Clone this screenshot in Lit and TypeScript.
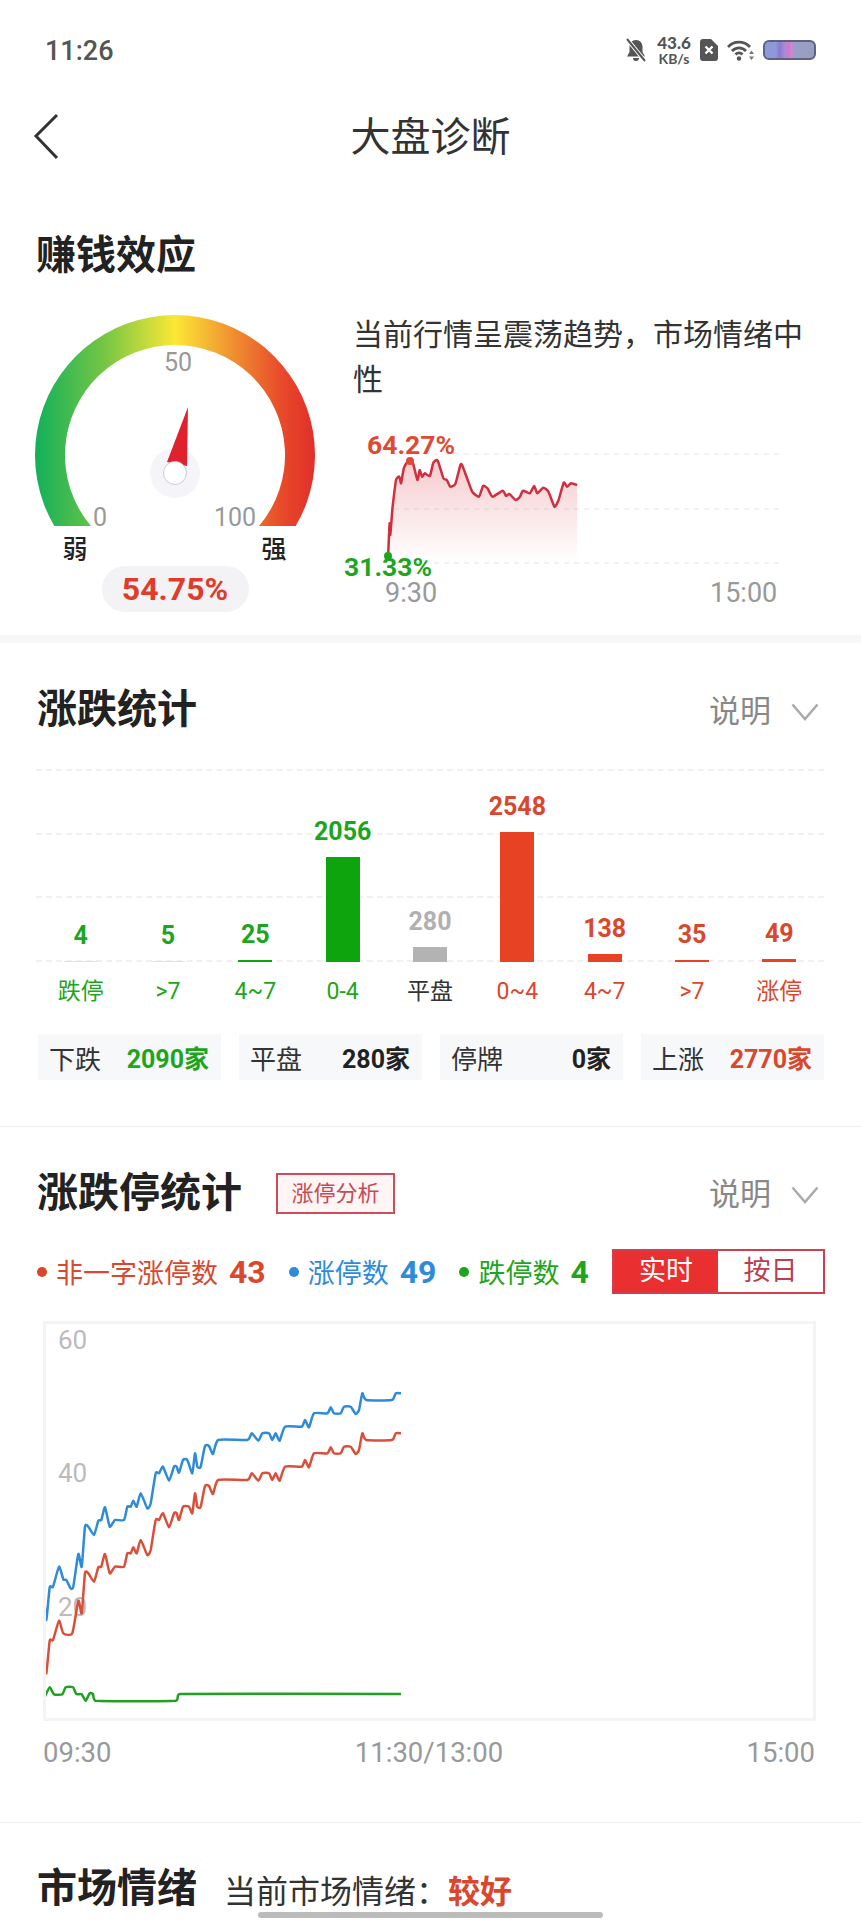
import { LitElement, html, css } from 'lit';
import { customElement } from 'lit/decorators.js';

type Pt = [number, number];

const clamp = (v: number, a: number, b: number) => Math.min(Math.max(v, a), b);

// smooth line through the points, kept tight so the small peaks survive
function smooth(pts: Pt[], t = 0.55): string {
  let d = `M${pts[0][0].toFixed(1)} ${pts[0][1].toFixed(1)}`;
  for (let i = 0; i < pts.length - 1; i++) {
    const p0 = pts[i - 1] || pts[i];
    const p1 = pts[i];
    const p2 = pts[i + 1];
    const p3 = pts[i + 2] || p2;
    const c1x = clamp(p1[0] + ((p2[0] - p0[0]) / 6) * t, p1[0], p2[0]);
    const c1y = p1[1] + ((p2[1] - p0[1]) / 6) * t;
    const c2x = clamp(p2[0] - ((p3[0] - p1[0]) / 6) * t, p1[0], p2[0]);
    const c2y = p2[1] - ((p3[1] - p1[1]) / 6) * t;
    d += `C${c1x.toFixed(1)} ${c1y.toFixed(1)} ${c2x.toFixed(1)} ${c2y.toFixed(1)} ${p2[0].toFixed(1)} ${p2[1].toFixed(1)}`;
  }
  return d;
}

const miniLine: Pt[] = ([
  [172, 760], [176, 670], [178, 705], [185, 620], [195, 540], [205, 530], [210, 550], [218, 505], [232, 480],
  [245, 490], [258, 540], [265, 510], [272, 530], [280, 520], [295, 528], [305, 488], [318, 482], [335, 535],
  [345, 540], [355, 560], [370, 552], [385, 495], [390, 495], [405, 535], [420, 575], [440, 590], [452, 558],
  [465, 565], [480, 590], [510, 572], [520, 588], [530, 582], [548, 600], [560, 592], [570, 572], [590, 580],
  [603, 558], [612, 580], [630, 563], [645, 575], [663, 620], [675, 600], [690, 548], [700, 560], [712, 550], [730, 555],
] as Pt[]).map(([x, y]) => [330 + x / 2.953, 300 + y / 3] as Pt);

const tail: Pt[] = [
  [655, 390], [668, 370], [688, 392], [700, 370], [720, 370], [730, 390], [740, 370], [752, 392], [768, 350],
  [818, 350], [828, 330], [840, 352], [855, 310], [895, 310], [905, 292], [915, 310], [935, 310], [945, 290],
  [965, 290], [980, 312], [990, 300], [1000, 250], [1012, 270], [1088, 270], [1100, 250], [1116, 250],
];

const toPage = (pts: Pt[]) => pts.map(([x, y]) => [30 + x / 3, 1310 + y / 3] as Pt);

const blueLine = toPage([
  [45, 860], [52, 930], [62, 832], [72, 830], [90, 770], [103, 808], [112, 810], [125, 835], [133, 830], [148, 732],
  [158, 770], [168, 650], [178, 650], [195, 675], [208, 632], [217, 630], [228, 592], [242, 650], [258, 630], [285, 630],
  [295, 590], [305, 590], [313, 572], [323, 590], [335, 550], [355, 595], [365, 580], [380, 490], [390, 490], [402, 470],
  [420, 512], [435, 470], [443, 470], [450, 488], [462, 450], [475, 450], [490, 490], [498, 430], [505, 470], [515, 470],
  [528, 408], [540, 408], [552, 432], [568, 390],
  ...tail,
]);

const redLine = toPage([
  [45, 1050], [52, 1090], [62, 992], [72, 990], [90, 932], [103, 970], [130, 970], [148, 872], [158, 910], [168, 790],
  [178, 790], [195, 815], [208, 772], [217, 770], [228, 732], [242, 790], [258, 770], [285, 770], [295, 730], [305, 730],
  [313, 712], [323, 730], [335, 690], [355, 735], [365, 720], [380, 630], [390, 630], [402, 610], [420, 652], [435, 610],
  [443, 610], [450, 630], [462, 590], [480, 590], [490, 610], [498, 550], [505, 590], [515, 590], [528, 528], [540, 528],
  [552, 552], [568, 510],
  ...tail.map(([x, y]) => [x, y + 120] as Pt),
]);

const greenLine = toPage([
  [45, 1165], [62, 1132], [75, 1153], [100, 1153], [110, 1132], [132, 1132], [142, 1152], [158, 1153], [170, 1172],
  [182, 1150], [192, 1152], [200, 1172], [440, 1172], [452, 1152], [1116, 1152],
]);

const bars = [
  { value: '4', label: '跌停', h: 1, tone: 'down', bar: '#e4e4e4' },
  { value: '5', label: '>7', h: 1, tone: 'down', bar: '#e4e4e4' },
  { value: '25', label: '4~7', h: 2, tone: 'down', bar: '#0ea40e' },
  { value: '2056', label: '0-4', h: 105, tone: 'down', bar: '#0ea40e' },
  { value: '280', label: '平盘', h: 15, tone: 'flat', bar: '#b3b3b3' },
  { value: '2548', label: '0~4', h: 130, tone: 'up', bar: '#e64223' },
  { value: '138', label: '4~7', h: 8, tone: 'up', bar: '#e64223' },
  { value: '35', label: '>7', h: 2, tone: 'up', bar: '#e64223' },
  { value: '49', label: '涨停', h: 3, tone: 'up', bar: '#e64223' },
];

const totals = [
  { label: '下跌', value: '2090家', tone: 'down' },
  { label: '平盘', value: '280家', tone: 'dark' },
  { label: '停牌', value: '0家', tone: 'dark' },
  { label: '上涨', value: '2770家', tone: 'up' },
];

const legend = [
  { label: '非一字涨停数', value: '43', tone: 'up' },
  { label: '涨停数', value: '49', tone: 'blue' },
  { label: '跌停数', value: '4', tone: 'down' },
];

@customElement('app-root')
export class AppRoot extends LitElement {
  static override styles = css`
    :host {
      display: block;
      position: relative;
      width: 861px;
      height: 1920px;
      overflow: hidden;
      background: #fff;
      color: #222;
      font-family: Roboto, 'Noto Sans CJK SC', sans-serif;
    }

    svg {
      display: block;
    }

    .status {
      display: flex;
      align-items: center;
      height: 100px;
      padding: 0 45px;
      color: #555;
    }

    .time {
      margin-top: 2px;
      font-size: 27px;
      font-weight: 500;
    }

    .status-icons {
      display: flex;
      align-items: center;
      margin-left: auto;
    }

    .speed {
      display: flex;
      flex-direction: column;
      align-items: center;
      width: 36px;
      margin: 0 8px 0 9px;
      font-weight: 700;
      font-family: Lato, Roboto, sans-serif;
    }

    .speed b {
      font-size: 17px;
      line-height: 17px;
    }

    .speed span {
      font-size: 14px;
      line-height: 15px;
    }

    .battery {
      position: relative;
      width: 53px;
      height: 20px;
      margin-left: 8px;
      box-sizing: border-box;
      border: 2px solid #5d6283;
      border-radius: 6px;
      background: linear-gradient(90deg, #8c9bd8 0%, #8c9bd8 22%, #8a78d0 30%, #a88bd6 40%, #d676c8 48%, #c98ad0 54%, #99a0c8 62%, #979dc2 100%);
    }

    .nav {
      position: relative;
      display: flex;
      align-items: center;
      justify-content: center;
      height: 68px;
      padding-bottom: 4px;
      font-size: 40px;
      color: #333;
    }

    .back {
      position: absolute;
      left: 32px;
      top: 12px;
    }

    .head {
      display: flex;
      align-items: center;
      height: 48px;
      padding: 0 37px;
    }

    .head h2 {
      margin: 0;
      font-size: 40px;
      line-height: 48px;
      font-weight: 700;
      color: #222;
    }

    .earn {
      height: 463px;
      padding-top: 60px;
      box-sizing: border-box;
    }

    .earn .head {
      padding-left: 36px;
    }

    .earn-body {
      display: flex;
      margin-top: 20px;
    }

    .gauge {
      display: flex;
      flex-direction: column;
      align-items: center;
      width: 350px;
      flex: none;
    }

    .pill {
      width: 147px;
      height: 46px;
      line-height: 46px;
      text-align: center;
      border-radius: 23px;
      background: #f3f3f5;
      color: #e03c2b;
      font-size: 32px;
      font-weight: 700;
    }

    .earn-right {
      flex: 1;
    }

    .earn-right p {
      width: 452px;
      margin: 12px 0 0 3px;
      font-size: 30px;
      line-height: 45px;
      color: #333;
    }

    .earn-right svg {
      margin: 18px 0 0 -10px;
    }

    .band {
      height: 8px;
      background: #f7f7f7;
    }

    .more {
      display: flex;
      align-items: center;
      margin-left: auto;
      padding-bottom: 4px;
      font-size: 31px;
      color: #888;
    }

    .more svg {
      margin: 8px 5px 0 20px;
    }

    .updown {
      padding-top: 43px;
      padding-bottom: 46px;
      border-bottom: 1px solid #eee;
    }

    .plot {
      position: relative;
      height: 193px;
      margin: 35px 37px 0 36px;
    }

    .rules {
      position: absolute;
      inset: 0;
      display: flex;
      flex-direction: column;
      justify-content: space-between;
    }

    .rules i {
      display: block;
      border-top: 2px dashed #f0f0f0;
    }

    .cols,
    .labels {
      position: relative;
      display: grid;
      grid-template-columns: repeat(9, 1fr);
      padding: 0 1px;
    }

    .cols {
      height: 100%;
      align-items: end;
    }

    .col {
      display: flex;
      flex-direction: column;
      align-items: center;
    }

    .value {
      margin-bottom: 10px;
      font-size: 25px;
      line-height: 30px;
      font-weight: 700;
    }

    .bar {
      width: 34px;
    }

    .labels {
      margin: 15px 37px 0 36px;
      font-size: 23px;
      line-height: 30px;
      text-align: center;
    }

    .down {
      color: #1ea51e;
    }

    .flat {
      color: #b0b0b0;
    }

    .up {
      color: #d9472d;
    }

    .blue {
      color: #2e8bd8;
    }

    .dark {
      color: #222;
    }

    .labels .flat {
      color: #333;
    }

    .totals {
      display: grid;
      grid-template-columns: repeat(4, 1fr);
      gap: 18px;
      margin: 27px 37px 0 38px;
    }

    .total {
      display: flex;
      align-items: center;
      justify-content: space-between;
      height: 46px;
      padding: 0 12px 0 11px;
      background: #f7f8fa;
      font-size: 26px;
      color: #333;
    }

    .total b {
      font-size: 25px;
    }

    .limit {
      padding-top: 42px;
      padding-bottom: 52px;
      border-bottom: 1px solid #eee;
    }

    .limit .head h2 {
      font-size: 41px;
    }

    .tag {
      margin-left: 34px;
      width: 119px;
      height: 41px;
      line-height: 38px;
      box-sizing: border-box;
      border: 2px solid #cf4d5b;
      background: #fff5f5;
      color: #c84a55;
      font-size: 22px;
      text-align: center;
    }

    .legend {
      display: flex;
      align-items: center;
      height: 45px;
      margin: 32px 38px 0 37px;
    }

    .item {
      display: flex;
      flex: none;
      align-items: center;
      margin-right: 23px;
      font-size: 27px;
      white-space: nowrap;
    }

    .item:last-of-type {
      margin-right: 0;
    }

    .dot {
      width: 10px;
      height: 10px;
      margin-right: 9px;
      border-radius: 50%;
      background: currentColor;
    }

    .item b {
      margin-left: 11px;
      font-size: 32px;
    }

    .toggle {
      display: flex;
      flex: none;
      margin-left: auto;
      width: 213px;
      height: 45px;
      box-sizing: border-box;
      border: 2px solid #cf3f4d;
      font-size: 27px;
      line-height: 41px;
      text-align: center;
      color: #b84050;
    }

    .toggle span {
      flex: 1;
    }

    .toggle .on {
      background: #e92f2f;
      color: #fff;
    }

    .box {
      box-sizing: border-box;
      width: 773px;
      height: 400px;
      margin: 27px 0 0 43px;
      border: 3px solid #f4f4f4;
    }

    .axis {
      display: flex;
      justify-content: space-between;
      margin: 15px 46px 0 43px;
      font-size: 27.5px;
      line-height: 34px;
      color: #999;
    }

    .mood {
      padding-top: 42px;
    }

    .mood .sub {
      margin-left: 27px;
      font-size: 32px;
      color: #333;
    }

    .mood .sub b {
      color: #d9472d;
    }

    .home {
      position: absolute;
      left: 258px;
      bottom: 2px;
      width: 345px;
      height: 6px;
      border-radius: 3px;
      background: #bbb;
    }
  `;

  private chevron() {
    return html`<svg width="28" height="18" viewBox="0 0 28 18">
      <path d="M1.5 1.5 14 16 26.5 1.5" fill="none" stroke="#aaa" stroke-width="2.5" />
    </svg>`;
  }

  private statusIcons() {
    return html`<div class="status-icons">
      <svg width="22" height="24" viewBox="0 0 22 24">
        <path d="M11 2c-4 0-6.5 3-6.5 7v5L2 18.5h18L17.500 14V9c0-4-2.500-7-6.500-7ZM8 20a3 3 0 0 0 6 0Z" fill="#555" />
        <path d="M2 1 20 23" stroke="#fff" stroke-width="4" />
        <path d="M2 1 20 23" stroke="#555" stroke-width="2" />
      </svg>
      <div class="speed"><b>43.6</b><span>KB/s</span></div>
      <svg width="18" height="22" viewBox="0 0 18 22">
        <path d="M3 0h8l7 7v12a3 3 0 0 1-3 3H3a3 3 0 0 1-3-3V3a3 3 0 0 1 3-3Z" fill="#555" />
        <path d="M5.500 7.500 12.500 14.500M12.500 7.500 5.500 14.500" stroke="#fff" stroke-width="2.400" />
      </svg>
      <svg style="margin-left:9px" width="28" height="22" viewBox="0 0 28 22">
        <g fill="none" stroke="#555" stroke-width="2.800">
          <path d="M1 8C7 1.500 17 1.500 23 8" />
          <path d="M5 12c4-4.200 10-4.200 14 0" />
          <path d="M8.500 15.500c2-2 5-2 7 0" />
        </g>
        <circle cx="12" cy="19.500" r="2.200" fill="#555" />
        <path d="M24.500 11.500 27 15h-5ZM24.500 21 22 17.500h5Z" fill="#777" />
      </svg>
      <div class="battery"></div>
    </div>`;
  }

  private gauge() {
    return html`<svg width="350" height="266" viewBox="0 300 350 266">
      <defs>
        <linearGradient id="arc" gradientUnits="userSpaceOnUse" x1="35" y1="0" x2="315" y2="0">
          <stop offset="0" stop-color="#12b05a" />
          <stop offset="0.25" stop-color="#76c644" />
          <stop offset="0.5" stop-color="#fce835" />
          <stop offset="0.72" stop-color="#ef8a30" />
          <stop offset="0.88" stop-color="#e84a2a" />
          <stop offset="1" stop-color="#e02f2b" />
        </linearGradient>
      </defs>
      <path d="M54.300 526A140 140 0 1 1 295.700 526L259 526A110 110 0 1 0 91 526Z" fill="url(#arc)" />
      <g font-size="25" fill="#999" text-anchor="middle">
        <text x="178" y="371">50</text>
        <text x="100" y="526">0</text>
        <text x="235" y="526">100</text>
      </g>
      <g font-size="25" font-weight="500" fill="#222" text-anchor="middle">
        <text x="75" y="558">弱</text>
        <text x="274" y="558">强</text>
      </g>
      <circle cx="175" cy="473" r="25" fill="#f5f5f9" />
      <path d="M188 407 187 466 167 462Z" fill="#e0222f" />
      <circle cx="175" cy="473" r="11.500" fill="#fff" stroke="#ccc" stroke-width="1" />
    </svg>`;
  }

  private miniChart() {
    const first = miniLine[0];
    const last = miniLine[miniLine.length - 1];
    const line = smooth(miniLine);
    return html`<svg width="461" height="190" viewBox="340 420 461 190">
      <defs>
        <linearGradient id="mini" x1="0" y1="0" x2="0" y2="1">
          <stop offset="0" stop-color="#e0474f" stop-opacity="0.28" />
          <stop offset="1" stop-color="#e0474f" stop-opacity="0" />
        </linearGradient>
      </defs>
      <g stroke="#eee" stroke-width="1.500" stroke-dasharray="5 5">
        <path d="M394 454H784" />
        <path d="M394 509H784" />
        <path d="M394 563H784" />
      </g>
      <path d="${line}L${last[0]} 563L${first[0]} 563Z" fill="url(#mini)" />
      <path d=${line} fill="none" stroke="#cf2f3f" stroke-width="2.500" />
      <circle cx="410" cy="461" r="4" fill="#e04a35" />
      <circle cx="388" cy="556" r="4" fill="#1ea51e" />
      <g font-size="26.500" font-weight="700">
        <text x="367" y="454" fill="#e04a35">64.27%</text>
        <text x="344" y="576" fill="#1ea51e">31.33%</text>
      </g>
      <g font-size="27" fill="#999">
        <text x="385" y="602">9:30</text>
        <text x="710" y="602">15:00</text>
      </g>
    </svg>`;
  }

  private limitChart() {
    return html`<svg width="767" height="394" viewBox="47 1324 767 394">
      <g font-size="26" fill="#bbb">
        <text x="59" y="1349">60</text>
        <text x="59" y="1482">40</text>
        <text x="59" y="1616">20</text>
      </g>
      <g fill="none" stroke-width="2.500">
        <path d=${smooth(blueLine)} stroke="#2e8bd8" />
        <path d=${smooth(redLine)} stroke="#d9503a" />
        <path d=${smooth(greenLine)} stroke="#22a022" />
      </g>
    </svg>`;
  }

  override render() {
    return html`
      <div class="status">
        <span class="time">11:26</span>
        ${this.statusIcons()}
      </div>
      <div class="nav">
        <svg class="back" width="28" height="48" viewBox="0 0 28 48">
          <path d="M25 3 4 24 25 46" fill="none" stroke="#333" stroke-width="3" />
        </svg>
        大盘诊断
      </div>

      <section class="earn">
        <div class="head"><h2>赚钱效应</h2></div>
        <div class="earn-body">
          <div class="gauge">
            ${this.gauge()}
            <div class="pill">54.75%</div>
          </div>
          <div class="earn-right">
            <p>当前行情呈震荡趋势，市场情绪中性</p>
            ${this.miniChart()}
          </div>
        </div>
      </section>
      <div class="band"></div>

      <section class="updown">
        <div class="head">
          <h2>涨跌统计</h2>
          <div class="more">说明${this.chevron()}</div>
        </div>
        <div class="plot">
          <div class="rules"><i></i><i></i><i></i><i></i></div>
          <div class="cols">
            ${bars.map(
              (b) => html`<div class="col">
                <span class="value ${b.tone}">${b.value}</span>
                <div class="bar" style="height:${b.h}px;background:${b.bar}"></div>
              </div>`
            )}
          </div>
        </div>
        <div class="labels">
          ${bars.map((b) => html`<span class=${b.tone}>${b.label}</span>`)}
        </div>
        <div class="totals">
          ${totals.map(
            (t) => html`<div class="total"><span>${t.label}</span><b class=${t.tone}>${t.value}</b></div>`
          )}
        </div>
      </section>

      <section class="limit">
        <div class="head">
          <h2>涨跌停统计</h2>
          <div class="tag">涨停分析</div>
          <div class="more">说明${this.chevron()}</div>
        </div>
        <div class="legend">
          ${legend.map(
            (l) => html`<div class="item ${l.tone}"><i class="dot"></i>${l.label}<b>${l.value}</b></div>`
          )}
          <div class="toggle"><span class="on">实时</span><span>按日</span></div>
        </div>
        <div class="box">${this.limitChart()}</div>
        <div class="axis"><span>09:30</span><span>11:30/13:00</span><span>15:00</span></div>
      </section>

      <section class="mood">
        <div class="head">
          <h2>市场情绪</h2>
          <div class="sub">当前市场情绪：<b>较好</b></div>
        </div>
      </section>

      <div class="home"></div>
    `;
  }
}

declare global {
  interface HTMLElementTagNameMap {
    'app-root': AppRoot;
  }
}
